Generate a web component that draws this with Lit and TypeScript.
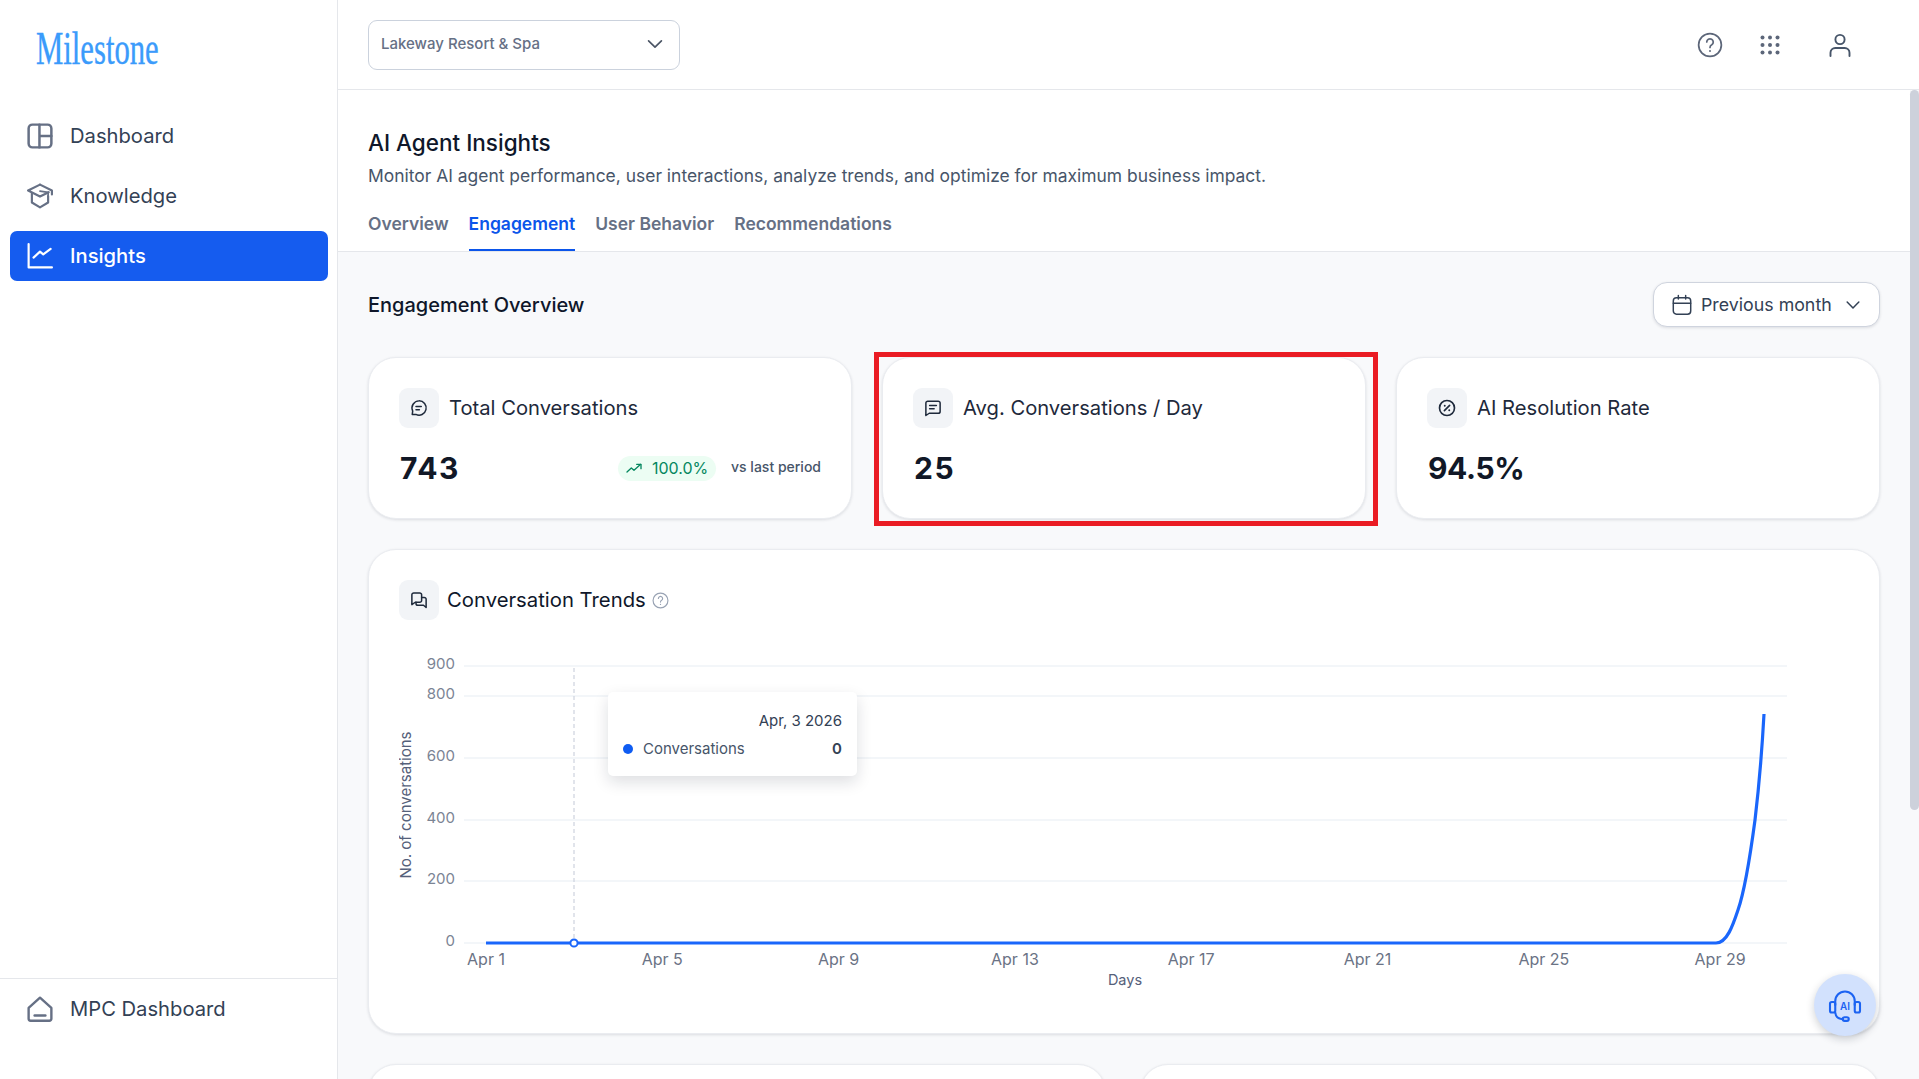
import { LitElement, html, css, svg } from 'lit';
import { customElement } from 'lit/decorators.js';

const icon = (body: unknown, size = 26, vb = 24) => html`<svg
  width=${size}
  height=${size}
  viewBox="0 0 ${vb} ${vb}"
  fill="none"
  stroke="currentColor"
  stroke-width="1.8"
  stroke-linecap="round"
  stroke-linejoin="round"
>${body}</svg>`;

const icons = {
  dashboard: svg`<rect x="1.5" y="1.5" width="21" height="21" rx="3.5" stroke-width="2.3"/><path d="M11.5 1.5v21M11.5 12h11" stroke-width="2.3"/>`,
  knowledge: svg`<path d="M12 1.5 23 7v3.5" stroke-width="2"/><path d="M12 1.5 1 7l11 5.5L20 8.5" stroke-width="2"/><path d="M4.5 9.5v8.5l7.5 4.5 7.5-4.5V12" stroke-width="2"/><path d="M12 7.5l7.5 1.2V13" stroke-width="1.6"/>`,
  insights: svg`<path d="M1.5 1v21.5H23" stroke-width="2"/><path d="M6 13.5 12 8l3 2.5 6.8-5" stroke-width="2"/>`,
  home: svg`<path d="M12 1.5 22.5 11v10a1.8 1.8 0 0 1-1.8 1.8H3.3A1.8 1.8 0 0 1 1.5 21V11Z" stroke-width="2.2"/><path d="M7 18h10" stroke-width="2.2"/>`,
  chevron: svg`<path d="m5 8.5 7 7 7-7"/>`,
  help: svg`<circle cx="12" cy="12" r="10.5" stroke-width="1.6"/><path d="M9 9.2a3 3 0 1 1 4.6 2.6c-1 .6-1.6 1.2-1.6 2.4" stroke-width="1.6"/><path d="M12 17.5v.1" stroke-width="1.8"/>`,
  user: svg`<circle cx="12" cy="6.5" r="4.6" stroke-width="1.9"/><path d="M2.5 23v-3.2A4.8 4.8 0 0 1 7.3 15h9.4a4.8 4.8 0 0 1 4.8 4.8V23" stroke-width="1.9"/>`,
  calendar: svg`<rect x="2.5" y="4" width="19" height="18" rx="3.5" stroke-width="1.6"/><path d="M2.5 10h19M8 1.5v4M16 1.5v4" stroke-width="1.6"/>`,
  chatRound: svg`<path d="M12 2.5a9.5 9.5 0 1 1-4.2 18H3l.6-4.4A9.5 9.5 0 0 1 12 2.5Z" stroke-width="2"/><path d="M8 10h7M8 14.2h4.5" stroke-width="2"/>`,
  chatSquare: svg`<path d="M5 3h14a2.5 2.5 0 0 1 2.5 2.5v11A2.5 2.5 0 0 1 19 19H7l-4.5 3V5.5A2.5 2.5 0 0 1 5 3Z" stroke-width="2"/><path d="M7.5 8.5h9M7.5 13h6" stroke-width="2"/>`,
  percent: svg`<circle cx="12" cy="12" r="10" stroke-width="2.2"/><path d="m15.5 8.5-7 7" stroke-width="2.2"/><path d="M9 9v.1M15 15v.1" stroke-width="2.6"/>`,
  chats: svg`<path d="M15.5 12.5a2.5 2.5 0 0 1-2.5 2.5H7l-4.5 3.2V5A2.5 2.5 0 0 1 5 2.5h8A2.5 2.5 0 0 1 15.5 5Z" stroke-width="2"/><path d="M15.5 8.5H19A2.5 2.5 0 0 1 21.5 11v11l-3.5-3h-7.5a2.5 2.5 0 0 1-2.5-2.5V15" stroke-width="2"/>`,
  trend: svg`<path d="m1.5 18 6.5-6 4 3.5 10-9" stroke-width="2"/><path d="M16 6.5h6.5V13" stroke-width="2"/>`,
  headset: svg`<path d="M5.5 12V9.5a6.5 6.5 0 0 1 13 0V12" stroke-width="1.4"/><rect x="2" y="10" width="3.5" height="7" rx="1.2" stroke-width="1.4"/><rect x="18.5" y="10" width="3.5" height="7" rx="1.2" stroke-width="1.4"/><path d="M5.5 17c.3 2.8 2.4 4.3 5 4.5" stroke-width="1.4"/><rect x="10.5" y="20.2" width="4" height="2.4" rx="1.2" stroke-width="1.4"/><text x="12" y="15" text-anchor="middle" font-family="Inter" font-size="6.6" font-weight="600" fill="currentColor" stroke="none">AI</text>`,
};

const gridDots = html`<svg width="20" height="20" viewBox="0 0 20 20" fill="currentColor">
  ${[2.5, 10, 17.5].map((y) => [2.5, 10, 17.5].map((x) => svg`<circle cx=${x} cy=${y} r="2"/>`))}
</svg>`;

const yTicks = [
  { label: '900', y: 666 },
  { label: '800', y: 696 },
  { label: '600', y: 758 },
  { label: '400', y: 820 },
  { label: '200', y: 881 },
  { label: '0', y: 943 },
];
const xTicks = ['Apr 1', 'Apr 5', 'Apr 9', 'Apr 13', 'Apr 17', 'Apr 21', 'Apr 25', 'Apr 29'];

@customElement('app-root')
export class AppRoot extends LitElement {
  static styles = css`
    :host {
      display: flex;
      height: 100vh;
      font-family: Inter, 'Noto Sans', sans-serif;
      color: #1e293b;
      background: #fff;
      overflow: hidden;
    }
    .sidebar {
      width: 338px;
      flex: none;
      box-sizing: border-box;
      border-right: 1px solid #e5e7eb;
      display: flex;
      flex-direction: column;
    }
    .logo {
      height: 111px;
      padding: 23px 0 0 36px;
      box-sizing: border-box;
      color: #3b9bfb;
      font-family: 'Liberation Serif', serif;
      font-size: 46px;
      line-height: 52px;
      -webkit-text-stroke: 0.4px #3b9bfb;
      transform: scaleX(0.667);
      transform-origin: 36px 0;
      white-space: nowrap;
    }
    .nav {
      flex: 1;
      padding: 0 9px 0 10px;
      display: flex;
      flex-direction: column;
      gap: 10px;
    }
    .nav-item {
      height: 50px;
      display: flex;
      align-items: center;
      gap: 17px;
      padding-left: 17px;
      border-radius: 7px;
      font-size: 20.2px;
      color: #334155;
    }
    .nav-item span {
      padding-bottom: 2px;
    }
    .nav-item svg {
      color: #667085;
      flex: none;
    }
    .nav-item.active {
      background: #155cef;
      color: #fff;
      font-weight: 500;
    }
    .nav-item.active svg {
      color: #fff;
    }
    .side-foot {
      border-top: 1px solid #e5e7eb;
      padding: 5px 9px 45px 10px;
    }
    .main {
      flex: 1;
      min-width: 0;
      position: relative;
      display: flex;
      flex-direction: column;
    }
    .topbar {
      height: 90px;
      flex: none;
      box-sizing: border-box;
      border-bottom: 1px solid #e5e7eb;
      padding: 0 67px 0 30px;
      display: flex;
      align-items: center;
      justify-content: space-between;
    }
    .select {
      width: 312px;
      height: 50px;
      box-sizing: border-box;
      border: 1px solid #cbd2dd;
      border-radius: 9px;
      padding: 0 13px 2px 12px;
      display: flex;
      align-items: center;
      justify-content: space-between;
      font-size: 15px;
      font-weight: 500;
      color: #667085;
    }
    .select svg {
      color: #4b5565;
    }
    .top-icons {
      display: flex;
      align-items: center;
      color: #5c6679;
    }
    .top-icons .grid-btn {
      margin: 0 48px 0 37px;
      display: flex;
    }
    .top-icons .user {
      color: #475569;
      display: flex;
    }
    .scroll {
      flex: 1;
      min-height: 0;
      overflow: hidden;
      padding-right: 9px;
      background: #f8f9fb;
    }
    .thumb {
      position: absolute;
      right: 0;
      top: 90px;
      width: 9px;
      height: 720px;
      border-radius: 5px;
      background: #cdd1db;
    }
    .page-head {
      background: #fff;
      border-bottom: 1px solid #e5e7eb;
      height: 162px;
      box-sizing: border-box;
      padding: 37px 30px 0;
    }
    h1 {
      margin: 0;
      font-size: 22.5px;
      line-height: 32px;
      font-weight: 500;
      color: #0f172a;
    }
    .sub {
      margin: 5px 0 0;
      font-size: 17.45px;
      line-height: 24px;
      color: #475569;
    }
    .tabs {
      display: flex;
      gap: 20px;
      margin-top: 24px;
    }
    .tab {
      font-size: 17.5px;
      font-weight: 600;
      line-height: 24px;
      padding-bottom: 13px;
      color: #667085;
      border-bottom: 2px solid transparent;
    }
    .tab.active {
      color: #0b55ea;
      border-bottom-color: #0b55ea;
    }
    .content {
      padding: 30px;
      display: flex;
      flex-direction: column;
      gap: 30px;
    }
    .section-head {
      display: flex;
      align-items: center;
      justify-content: space-between;
      height: 45px;
    }
    h2 {
      margin: 0;
      font-size: 20px;
      font-weight: 500;
      color: #0f172a;
    }
    .period {
      width: 227px;
      height: 45px;
      box-sizing: border-box;
      background: #fff;
      border: 1px solid #cfd4de;
      border-radius: 14px;
      box-shadow: 0 1px 3px rgba(16, 24, 40, 0.12);
      display: flex;
      align-items: center;
      gap: 8px;
      padding: 0 16px 0 17px;
      font-size: 17.8px;
      color: #334155;
    }
    .period span {
      flex: 1;
      white-space: nowrap;
    }
    .period svg {
      flex: none;
    }
    .stats {
      display: grid;
      grid-template-columns: repeat(3, 1fr);
      gap: 30px;
    }
    .card {
      background: #fff;
      border: 1px solid #eaecf0;
      border-radius: 28px;
      box-shadow: 0 1px 3px rgba(16, 24, 40, 0.12);
      box-sizing: border-box;
      position: relative;
    }
    .stat {
      height: 162px;
      padding: 30px 30px 0;
    }
    .card-title {
      display: flex;
      align-items: center;
      gap: 10px;
      font-size: 20.2px;
      color: #1e293b;
    }
    .card-title .label {
      padding-bottom: 2px;
    }
    .icon-box {
      width: 40px;
      height: 40px;
      border-radius: 9px;
      background: #f2f4f7;
      display: flex;
      align-items: center;
      justify-content: center;
      color: #1e293b;
      flex: none;
    }
    .stat-row {
      display: flex;
      align-items: center;
      margin-top: 20px;
      height: 40px;
    }
    .value {
      flex: 1;
      margin-left: 1px;
      font-size: 30px;
      font-weight: 700;
      letter-spacing: 1.5px;
      color: #111827;
    }
    .value.tight {
      letter-spacing: -0.4px;
    }
    .badge {
      height: 25px;
      width: 98px;
      box-sizing: border-box;
      border-radius: 13px;
      background: #ecfdf3;
      color: #05875f;
      font-size: 16px;
      display: flex;
      align-items: center;
      justify-content: center;
      gap: 10px;
      margin-right: 15px;
    }
    .vs {
      padding-bottom: 3px;
      font-size: 14px;
      font-weight: 500;
      color: #475569;
    }
    .highlight {
      position: absolute;
      left: -9px;
      right: -13px;
      top: -6px;
      bottom: -8px;
      border: 5px solid #ea1c24;
      pointer-events: none;
    }
    .chart-card {
      height: 485px;
      padding: 30px 30px 0;
    }
    .chart-title {
      gap: 8px;
      font-size: 20.3px;
      color: #0f172a;
    }
    .chart-title .q {
      color: #98a2b3;
      display: flex;
      margin-left: -2px;
    }
    .chart {
      position: relative;
      margin-top: 30px;
      width: 1450px;
      height: 353px;
    }
    .chart svg {
      display: block;
    }
    .chart text {
      font-family: Inter, sans-serif;
    }
    .tooltip {
      position: absolute;
      left: 209px;
      top: 42px;
      width: 249px;
      height: 84px;
      box-sizing: border-box;
      padding: 19px 15px 0;
      background: #fff;
      border-radius: 5px;
      box-shadow: 0 6px 16px rgba(16, 24, 40, 0.14);
      font-size: 15px;
      color: #475569;
    }
    .tt-date {
      text-align: right;
      line-height: 20px;
      color: #334155;
    }
    .tt-row {
      display: flex;
      align-items: center;
      margin-top: 8px;
      line-height: 20px;
    }
    .tt-dot {
      width: 10px;
      height: 10px;
      border-radius: 50%;
      background: #0f5cf2;
      margin-right: 10px;
    }
    .tt-row b {
      margin-left: auto;
      font-weight: 600;
      color: #334155;
    }
    .lower {
      display: grid;
      grid-template-columns: 738px 740px;
      gap: 34px;
    }
    .lower .card {
      height: 353px;
    }
    .fab {
      position: absolute;
      left: 1476px;
      top: 974px;
      width: 62px;
      height: 62px;
      border-radius: 50%;
      background: #d2e1fd;
      box-shadow: 0 3px 8px rgba(16, 24, 40, 0.2);
      color: #1c63f2;
      display: flex;
      align-items: center;
      justify-content: center;
    }
  `;

  renderChart() {
    return html`<svg width="1450" height="353" viewBox="399 650 1450 353" fill="none">
      ${yTicks.map(
        (t) => svg`
          <line x1="464" x2="1787" y1=${t.y} y2=${t.y} stroke="#e8edf4" stroke-width="1.2" />
          <text x="455" y=${t.y - 2} dy="0.36em" text-anchor="end" font-size="15" fill="#7b8494">${t.label}</text>
        `,
      )}
      ${xTicks.map(
        (label, i) => svg`
          <text x=${486 + i * 176.3} y="959" dy="0.36em" text-anchor="middle" font-size="16" fill="#6b7385">${label}</text>
        `,
      )}
      <text transform="translate(406 805) rotate(-90)" dy="0.36em" text-anchor="middle" font-size="15" fill="#55607a">No. of conversations</text>
      <text x="1125" y="980" dy="0.36em" text-anchor="middle" font-size="14.5" fill="#55607a">Days</text>
      <line x1="574" x2="574" y1="668" y2="943" stroke="#cdd2de" stroke-width="1.2" stroke-dasharray="4 3" />
      <path
        d="M486 943 L1716 943 C1727 943 1733 925 1738 910 C1745 890 1751 850 1755 820 C1758 795 1762 750 1764 714"
        stroke="#1a66fb"
        stroke-width="3.2"
      />
      <circle cx="574" cy="943" r="3.6" fill="#fff" stroke="#1a66fb" stroke-width="2" />
    </svg>`;
  }

  render() {
    return html`
      <aside class="sidebar">
        <div class="logo">Milestone</div>
        <nav class="nav">
          <div class="nav-item">${icon(icons.dashboard)}<span>Dashboard</span></div>
          <div class="nav-item">${icon(icons.knowledge)}<span>Knowledge</span></div>
          <div class="nav-item active">${icon(icons.insights)}<span>Insights</span></div>
        </nav>
        <div class="side-foot">
          <div class="nav-item">${icon(icons.home)}<span>MPC Dashboard</span></div>
        </div>
      </aside>
      <div class="main">
        <header class="topbar">
          <div class="select"><span>Lakeway Resort &amp; Spa</span>${icon(icons.chevron, 22)}</div>
          <div class="top-icons">
            ${icon(icons.help, 26)}
            <span class="grid-btn">${gridDots}</span>
            <span class="user">${icon(icons.user, 24)}</span>
          </div>
        </header>
        <div class="scroll">
          <section class="page-head">
            <h1>AI Agent Insights</h1>
            <p class="sub">Monitor AI agent performance, user interactions, analyze trends, and optimize for maximum business impact.</p>
            <div class="tabs">
              <div class="tab">Overview</div>
              <div class="tab active">Engagement</div>
              <div class="tab">User Behavior</div>
              <div class="tab">Recommendations</div>
            </div>
          </section>
          <div class="content">
            <div class="section-head">
              <h2>Engagement Overview</h2>
              <div class="period">
                ${icon(icons.calendar, 22)}<span>Previous month</span>${icon(icons.chevron, 20)}
              </div>
            </div>
            <div class="stats">
              <div class="card stat">
                <div class="card-title">
                  <div class="icon-box">${icon(icons.chatRound, 18)}</div>
                  <span class="label">Total Conversations</span>
                </div>
                <div class="stat-row">
                  <div class="value">743</div>
                  <div class="badge">${icon(icons.trend, 16)}<span>100.0%</span></div>
                  <div class="vs">vs last period</div>
                </div>
              </div>
              <div class="card stat">
                <div class="card-title">
                  <div class="icon-box">${icon(icons.chatSquare, 18)}</div>
                  <span class="label">Avg. Conversations / Day</span>
                </div>
                <div class="stat-row"><div class="value">25</div></div>
                <div class="highlight"></div>
              </div>
              <div class="card stat">
                <div class="card-title">
                  <div class="icon-box">${icon(icons.percent, 18)}</div>
                  <span class="label">AI Resolution Rate</span>
                </div>
                <div class="stat-row"><div class="value tight">94.5%</div></div>
              </div>
            </div>
            <div class="card chart-card">
              <div class="card-title chart-title">
                <div class="icon-box">${icon(icons.chats, 18)}</div>
                <span class="label">Conversation Trends</span>
                <span class="q">${icon(icons.help, 17)}</span>
              </div>
              <div class="chart">
                ${this.renderChart()}
                <div class="tooltip">
                  <div class="tt-date">Apr, 3 2026</div>
                  <div class="tt-row">
                    <span class="tt-dot"></span><span>Conversations</span><b>0</b>
                  </div>
                </div>
              </div>
            </div>
            <div class="lower">
              <div class="card"></div>
              <div class="card"></div>
            </div>
          </div>
        </div>
        <div class="thumb"></div>
        <div class="fab">${icon(icons.headset, 36)}</div>
      </div>
    `;
  }
}
